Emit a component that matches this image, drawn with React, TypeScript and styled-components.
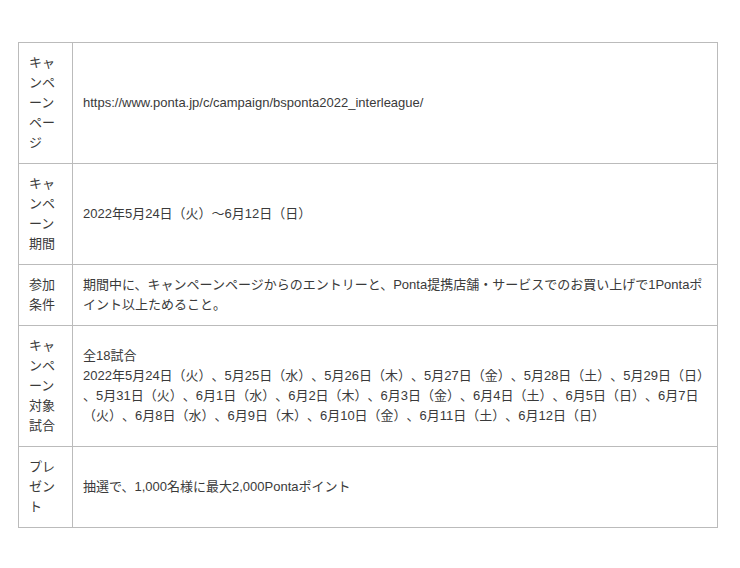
import React from "react";
import styled, { createGlobalStyle } from "styled-components";

const Global = createGlobalStyle`
  html, body { margin: 0; padding: 0; background: #fff; }
  body { font-family: "Liberation Sans", Arial, "Noto Sans CJK JP", sans-serif; }
`;

const Page = styled.div`
  padding: 42px 23px 0 18px;
`;

const Table = styled.table`
  width: 700px;
  table-layout: fixed;
  border-collapse: collapse;
  font-size: 13px;
  line-height: 20px;
  color: #3a3a3a;
  text-spacing-trim: space-all;
`;

const Label = styled.th`
  width: 31px;
  padding: 10px 12px 10px 10px;
  border: 1px solid #bbb;
  font-weight: normal;
  text-align: left;
  vertical-align: middle;
`;

const Value = styled.td`
  padding: 10px 10px;
  border: 1px solid #bbb;
  text-align: left;
  vertical-align: middle;
`;

const Line = styled.span`
  display: block;
  white-space: nowrap;
`;

const matchLines = [
  "全18試合",
  "2022年5月24日（火）、5月25日（水）、5月26日（木）、5月27日（金）、5月28日（土）、5月29日（日）",
  "、5月31日（火）、6月1日（水）、6月2日（木）、6月3日（金）、6月4日（土）、6月5日（日）、6月7日",
  "（火）、6月8日（水）、6月9日（木）、6月10日（金）、6月11日（土）、6月12日（日）",
];

const rows: { label: string; value: React.ReactNode }[] = [
  { label: "キャンペーンページ", value: "https://www.ponta.jp/c/campaign/bsponta2022_interleague/" },
  { label: "キャンペーン期間", value: "2022年5月24日（火）～6月12日（日）" },
  {
    label: "参加条件",
    value: "期間中に、キャンペーンページからのエントリーと、Ponta提携店舗・サービスでのお買い上げで1Pontaポイント以上ためること。",
  },
  {
    label: "キャンペーン対象試合",
    value: matchLines.map((l) => <Line key={l}>{l}</Line>),
  },
  { label: "プレゼント", value: "抽選で、1,000名様に最大2,000Pontaポイント" },
];

export default function App() {
  return (
    <>
      <Global />
      <Page>
        <Table>
          <tbody>
            {rows.map((r) => (
              <tr key={r.label}>
                <Label>{r.label}</Label>
                <Value>{r.value}</Value>
              </tr>
            ))}
          </tbody>
        </Table>
      </Page>
    </>
  );
}
